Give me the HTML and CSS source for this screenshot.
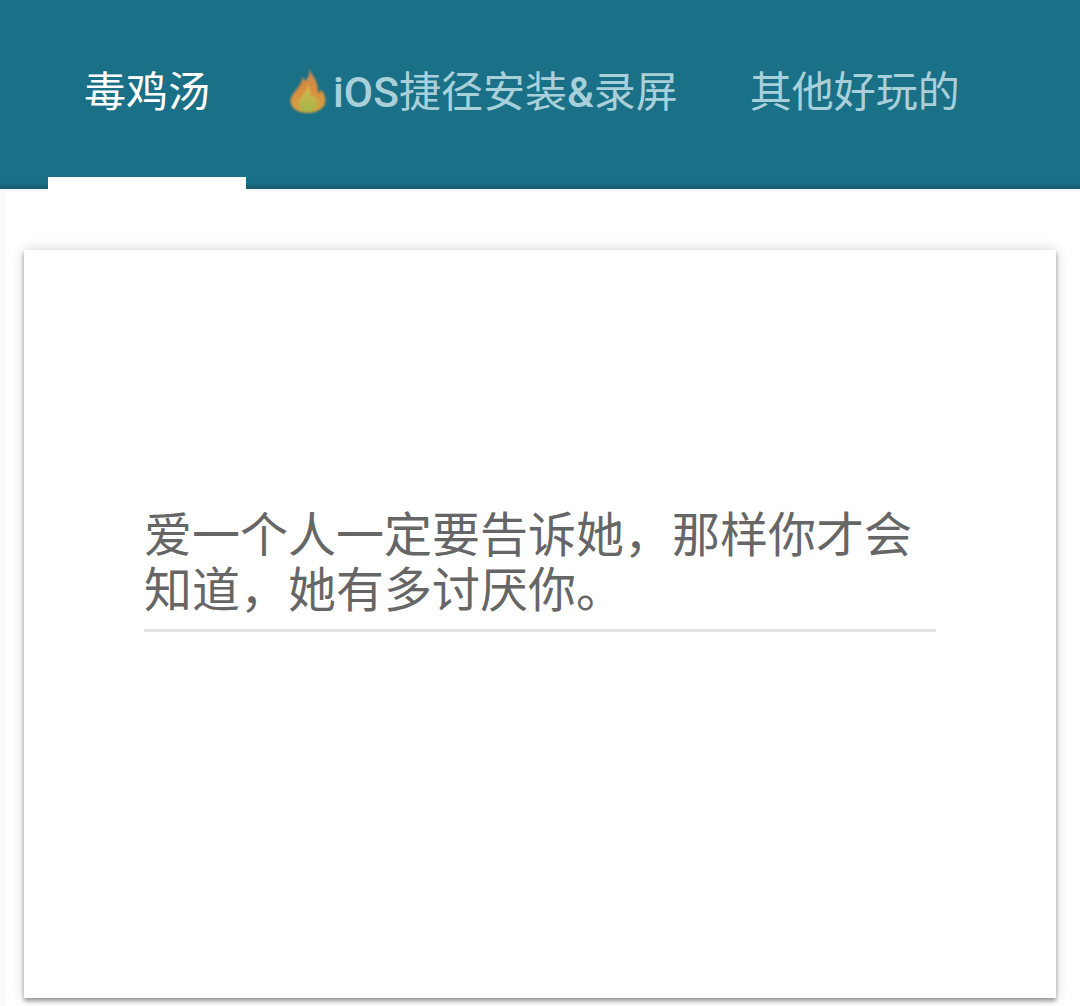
FILE: index.html
```html
<!DOCTYPE html>
<html lang="zh-CN">
<head>
    <meta charset="UTF-8">
    <title>毒鸡汤</title>
    <link rel="stylesheet" href="styles.css">
</head>
<body>
    <!-- Tabs -->
    <div class="tab-bar">
        <div class="tab active">毒鸡汤</div>
        <div class="tab">
            <svg class="flame" viewBox="0 0 36 46">
                <defs>
                    <linearGradient id="flame-outer" x1="0" y1="0" x2="0" y2="1">
                        <stop offset="0" stop-color="#c9885a"/>
                        <stop offset="0.5" stop-color="#d98d3f"/>
                        <stop offset="1" stop-color="#d6a23c"/>
                    </linearGradient>
                    <linearGradient id="flame-inner" x1="0" y1="0" x2="0" y2="1">
                        <stop offset="0" stop-color="#dcb850"/>
                        <stop offset="1" stop-color="#a3b64c"/>
                    </linearGradient>
                </defs>
                <path fill="url(#flame-outer)" d="M19 1c2 7 0 10-3 14-1-1-2-3-3-4 0 6-3 9-7 14-4 5-5 9-3 13 2 4 8 7 15 7 7 0 14-3 16-8 2-5 0-10-3-14-1 2-2 3-3 3 0-5-1-9-3-13-2-4-5-7-6-12z"/>
                <path fill="url(#flame-inner)" d="M18 17c1 5-2 8-5 12-3 3-4 6-3 9 1 4 4 6 8 6 5 0 8-3 9-6 1-4-1-7-3-10-1 1-2 2-3 2 0-5-1-9-3-13z"/>
            </svg>
            <span><span class="latin">iOS</span>捷径安装<span class="latin amp">&amp;</span>录屏</span>
        </div>
        <div class="tab">其他好玩的</div>
    </div>

    <!-- Card -->
    <div class="page">
        <div class="card">
            <div class="quote">爱一个人一定要告诉她，那样你才会知道，她有多讨厌你。</div>
        </div>
    </div>
</body>
</html>
```

FILE: styles.css
```css
body, html {
    margin: 0;
    padding: 0;
    height: 100%;
    font-family: 'Roboto', 'Noto Sans CJK SC', sans-serif;
    background-color: #fff;
    overflow: hidden;
}

.tab-bar {
    display: flex;
    height: 189px;
    padding-left: 48px;
    background: linear-gradient(#1a7086 183px, #155b70 189px);
}

.tab {
    display: flex;
    align-items: center;
    height: 177px;
    padding: 0 36px 1px;
    box-sizing: border-box;
    font-size: 42px;
    color: #a9d0da;
    white-space: nowrap;
}

.tab.active {
    color: #fff;
    height: 189px;
    padding-bottom: 1px;
    border-bottom: 12px solid #fff;
}

.latin {
    font-size: 42.5px;
    font-weight: 500;
}

.latin.amp {
    font-size: 42px;
}

.flame {
    width: 39px;
    height: 49px;
    margin: 3px 6px 0 6px;
    filter: blur(1px);
}

.page {
    height: 817px;
    padding: 61px 24px 0 18px;
    box-sizing: border-box;
    border-left: 6px solid #fafafa;
}

.card {
    height: 748px;
    padding: 258px 120px 0;
    box-sizing: border-box;
    background-color: #fff;
    box-shadow: 0 3px 4px rgba(0,0,0,0.35), 0 0 12px rgba(0,0,0,0.18);
}

.quote {
    font-size: 48px;
    line-height: 55px;
    color: #666;
    padding-bottom: 11px;
    border-bottom: 3px solid #e2e2e2;
}
```
